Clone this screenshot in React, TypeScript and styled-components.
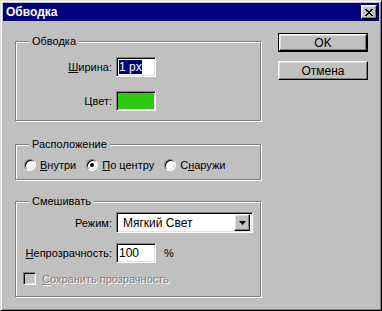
import React from 'react';
import styled, { createGlobalStyle, css } from 'styled-components';

const GlobalStyle = createGlobalStyle`
  html, body {
    margin: 0;
    padding: 0;
    background: #c0c0c0;
  }
  body {
    font-family: "Liberation Sans", Arial, sans-serif;
    font-size: 11px;
    color: #000;
  }
`;

const raised = css`
  border: 1px solid;
  border-color: #fff #000 #000 #fff;
  box-shadow: inset -1px -1px 0 #808080, inset 1px 1px 0 #dfdfdf;
`;

const sunken = css`
  border: 1px solid;
  border-color: #808080 #fff #fff #808080;
  box-shadow: inset 1px 1px 0 #000, inset -1px -1px 0 #dfdfdf;
`;

const Dialog: React.FC = () => {
  return (
    <Window>
      <TitleBar>
        <Title>Обводка</Title>
        <CloseButton>
          <svg width="8" height="7" viewBox="0 0 8 7">
            <path
              d="M0 0h2v1h1v1h2V1h1V0h2v1H7v1H6v1H5v1h1v1h1v1h1v1H6V6H5V5H3v1H2v1H0V6h1V5h1V4h1V3H2V2H1V1H0z"
              fill="#000"
            />
          </svg>
        </CloseButton>
      </TitleBar>
      <Body>
        <Groups>
          <Group $height={80} $top={20}>
            <Legend>Обводка</Legend>
            <FieldGrid $pad={15} $gap={14}>
              <Label>
                <U>Ш</U>ирина:
              </Label>
              <TextBox $width={40}>
                <Selected>1 px</Selected>
              </TextBox>
              <Label>Цвет:</Label>
              <Swatch />
            </FieldGrid>
          </Group>

          <Group $height={36} $top={23}>
            <Legend>Расположение</Legend>
            <RadioRow>
              <RadioItem>
                <Radio />
                <span>
                  <U>В</U>нутри
                </span>
              </RadioItem>
              <RadioItem>
                <Radio $checked />
                <span>
                  <U>П</U>о центру
                </span>
              </RadioItem>
              <RadioItem>
                <Radio />
                <span>
                  С<U>н</U>аружи
                </span>
              </RadioItem>
            </RadioRow>
          </Group>

          <Group $height={96} $top={21}>
            <Legend>Смешивать</Legend>
            <FieldGrid $pad={10} $gap={10}>
              <Label>Режим:</Label>
              <Select>
                <SelectText>Мягкий Свет</SelectText>
                <DropButton>
                  <svg width="7" height="4" viewBox="0 0 7 4">
                    <path d="M0 0h7L3.5 4z" fill="#000" />
                  </svg>
                </DropButton>
              </Select>
              <Label>
                <U>Н</U>епрозрачность:
              </Label>
              <InlineRow>
                <TextBox $width={40}>100</TextBox>
                <Percent>%</Percent>
              </InlineRow>
            </FieldGrid>
            <CheckRow>
              <CheckBox />
              <Disabled>
                <U>С</U>охранить прозрачность
              </Disabled>
            </CheckRow>
          </Group>
        </Groups>

        <Buttons>
          <DefaultFrame>
            <Button>OK</Button>
          </DefaultFrame>
          <Button $plain>Отмена</Button>
        </Buttons>
      </Body>
    </Window>
  );
};

const App: React.FC = () => (
  <>
    <GlobalStyle />
    <Dialog />
  </>
);

const Window = styled.div`
  width: 382px;
  height: 311px;
  box-sizing: border-box;
  background: #c0c0c0;
  border: 1px solid;
  border-color: #dfdfdf #000 #000 #dfdfdf;
  box-shadow: inset 1px 1px 0 #fff, inset -1px -1px 0 #808080;
  padding: 2px;
`;

const TitleBar = styled.div`
  height: 18px;
  background: #000080;
  display: flex;
  align-items: center;
  justify-content: space-between;
  padding: 0 2px 0 3px;
`;

const Title = styled.span`
  color: #fff;
  font-weight: bold;
  font-size: 12px;
`;

const CloseButton = styled.div`
  ${raised};
  box-sizing: border-box;
  width: 16px;
  height: 14px;
  background: #c0c0c0;
  display: flex;
  align-items: center;
  justify-content: center;
  svg {
    display: block;
  }
`;

const Body = styled.div`
  display: flex;
  padding-left: 12px;
`;

const Groups = styled.div`
  display: flex;
  flex-direction: column;
  width: 246px;
`;

const Group = styled.div<{ $height: number; $top: number }>`
  position: relative;
  box-sizing: border-box;
  height: ${(p) => p.$height}px;
  margin-top: ${(p) => p.$top}px;
  border: 1px solid #808080;
  box-shadow: inset 1px 1px 0 #fff, 1px 1px 0 #fff;
`;

const Legend = styled.span`
  position: absolute;
  top: -7px;
  left: 13px;
  padding: 0 3px;
  background: #c0c0c0;
  line-height: 13px;
`;

const FieldGrid = styled.div<{ $pad: number; $gap: number }>`
  display: grid;
  grid-template-columns: 96px auto;
  column-gap: 4px;
  row-gap: ${(p) => p.$gap}px;
  align-items: center;
  padding-top: ${(p) => p.$pad}px;
`;

const Label = styled.span`
  text-align: right;
`;

const U = styled.span`
  text-decoration: underline;
`;

const TextBox = styled.div<{ $width: number }>`
  ${sunken};
  box-sizing: border-box;
  width: ${(p) => p.$width}px;
  height: 20px;
  background: #fff;
  display: flex;
  align-items: center;
  padding-left: 2px;
  font-size: 12px;
`;

const Selected = styled.span`
  background: #000080;
  color: #fff;
  line-height: 14px;
`;

const Swatch = styled.div`
  ${sunken};
  box-sizing: border-box;
  width: 40px;
  height: 20px;
  background: #2ec910;
`;

const RadioRow = styled.div`
  display: flex;
  align-items: center;
  gap: 10px;
  padding: 14px 0 0 8px;
`;

const RadioItem = styled.label`
  display: flex;
  align-items: center;
  gap: 4px;
`;

const Radio = styled.span<{ $checked?: boolean }>`
  position: relative;
  box-sizing: border-box;
  width: 12px;
  height: 12px;
  border-radius: 50%;
  background: #fff;
  border: 1px solid;
  border-color: #808080 #fff #fff #808080;
  box-shadow: inset 1px 1px 0 #000, inset -1px -1px 0 #dfdfdf;
  &::after {
    content: '';
    display: ${(p) => (p.$checked ? 'block' : 'none')};
    position: absolute;
    top: 3px;
    left: 3px;
    width: 4px;
    height: 4px;
    border-radius: 50%;
    background: #000;
  }
`;

const Select = styled.div`
  ${sunken};
  box-sizing: border-box;
  width: 137px;
  height: 21px;
  background: #fff;
  display: flex;
  align-items: center;
  justify-content: space-between;
  padding: 2px;
`;

const SelectText = styled.span`
  padding-left: 4px;
  font-size: 12px;
`;

const DropButton = styled.div`
  ${raised};
  box-sizing: border-box;
  width: 16px;
  height: 17px;
  background: #c0c0c0;
  display: flex;
  align-items: center;
  justify-content: center;
  svg {
    display: block;
  }
`;

const InlineRow = styled.div`
  display: flex;
  align-items: center;
  gap: 8px;
`;

const Percent = styled.span``;

const CheckRow = styled.div`
  display: flex;
  align-items: center;
  gap: 6px;
  padding: 9px 0 0 7px;
`;

const CheckBox = styled.span`
  ${sunken};
  box-sizing: border-box;
  width: 13px;
  height: 13px;
  background: #c0c0c0;
`;

const Disabled = styled.span`
  color: #808080;
  text-shadow: 1px 1px 0 #fff;
`;

const Buttons = styled.div`
  display: flex;
  flex-direction: column;
  gap: 9px;
  margin: 12px 0 0 17px;
`;

const DefaultFrame = styled.div`
  border: 1px solid #000;
  width: 88px;
`;

const Button = styled.div<{ $plain?: boolean }>`
  ${raised};
  box-sizing: border-box;
  width: ${(p) => (p.$plain ? 90 : 88)}px;
  height: ${(p) => (p.$plain ? 19 : 17)}px;
  display: flex;
  align-items: center;
  justify-content: center;
  background: #c0c0c0;
  font-size: 12px;
`;

export default App;
